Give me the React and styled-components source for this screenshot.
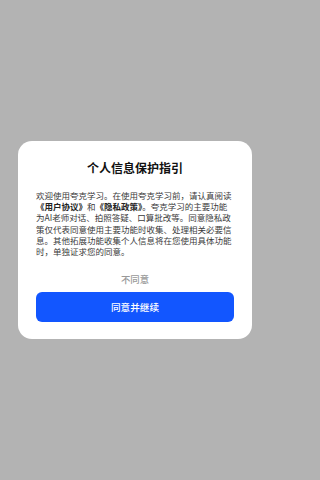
import styled, { createGlobalStyle } from "styled-components";

const GlobalStyle = createGlobalStyle`
  html, body {
    margin: 0;
    padding: 0;
    background: #b3b3b3;
  }
  body {
    font-family: "Noto Sans CJK SC", "Noto Sans", sans-serif;
  }
`;

// privacy consent dialog
export default function App() {
  return (
    <>
      <GlobalStyle />
      <Screen>
        <Card>
          <Title>个人信息保护指引</Title>
          <Body>
            <Line>欢迎使用夸克学习。在使用夸克学习前，请认真阅读</Line>
            <Line>
              <Link>《用户协议》</Link>和<Link>《隐私政策》</Link>。夸克学习的主要功能
            </Line>
            <Line>为AI老师对话、拍照答疑、口算批改等。同意隐私政</Line>
            <Line>策仅代表同意使用主要功能时收集、处理相关必要信</Line>
            <Line>息。其他拓展功能收集个人信息将在您使用具体功能</Line>
            <Line>时，单独证求您的同意。</Line>
          </Body>
          <Decline>不同意</Decline>
          <Accept>同意并继续</Accept>
        </Card>
      </Screen>
    </>
  );
}

const Screen = styled.div`
  width: 270px;
  height: 480px;
  display: flex;
  align-items: center;
  justify-content: center;
`;

const Card = styled.div`
  width: 234px;
  box-sizing: border-box;
  padding: 18px 18px 17px;
  background: #fff;
  border-radius: 14px;
  display: flex;
  flex-direction: column;
  align-items: stretch;
`;

const Title = styled.div`
  font-size: 12px;
  line-height: 18px;
  font-weight: 700;
  color: #111;
  text-align: center;
`;

const Body = styled.div`
  margin-top: 13px;
  font-size: 8.5px;
  line-height: 11.2px;
  color: #3a3a3a;
`;

const Line = styled.div`
  white-space: nowrap;
`;

const Link = styled.span`
  font-weight: 700;
  color: #222;
`;

const Decline = styled.button`
  margin-top: 15px;
  border: none;
  background: none;
  padding: 0;
  font-family: inherit;
  font-size: 9.4px;
  line-height: 14px;
  font-weight: 500;
  color: #999;
`;

const Accept = styled.button`
  margin-top: 6px;
  height: 30px;
  border: none;
  border-radius: 6px;
  background: #1256ff;
  color: #fff;
  font-family: inherit;
  font-size: 9.6px;
  font-weight: 500;
`;
